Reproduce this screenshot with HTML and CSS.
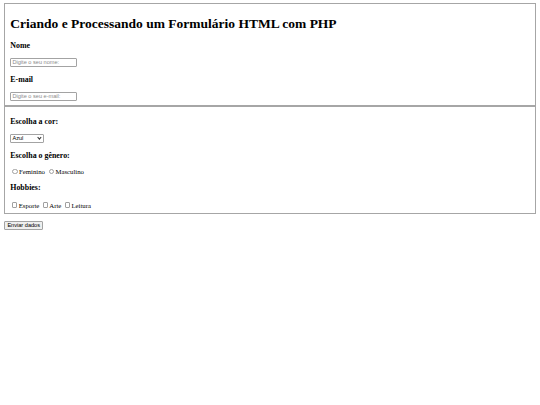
FILE: index.html
```html
<!DOCTYPE html>
<html lang="pt-BR">
<head>
<meta charset="utf-8">
<title>Formulário HTML com PHP</title>
<link rel="stylesheet" href="styles.css">
</head>
<body>
<form class="form" action="#" method="post">
  <fieldset class="group">
    <h1 class="title">Criando e Processando um Formulário HTML com PHP</h1>
    <h3 class="label">Nome</h3>
    <input class="text-field" type="text" name="nome" placeholder="Digite o seu nome:">
    <h3 class="label">E-mail</h3>
    <input class="text-field" type="email" name="email" placeholder="Digite o seu e-mail:">
  </fieldset>
  <fieldset class="group">
    <h3 class="label">Escolha a cor:</h3>
    <span class="select-wrap">
      <select class="select" name="cor">
        <option>Azul</option>
        <option>Verde</option>
        <option>Vermelho</option>
      </select>
    </span>
    <h3 class="label">Escolha o gênero:</h3>
    <div class="options">
      <label class="option"><input class="radio" type="radio" name="genero" value="F">Feminino</label>
      <label class="option"><input class="radio" type="radio" name="genero" value="M">Masculino</label>
    </div>
    <h3 class="label">Hobbies:</h3>
    <div class="options">
      <label class="option"><input class="check" type="checkbox" name="hobbies[]" value="esporte">Esporte</label>
      <label class="option"><input class="check" type="checkbox" name="hobbies[]" value="arte">Arte</label>
      <label class="option"><input class="check" type="checkbox" name="hobbies[]" value="leitura">Leitura</label>
    </div>
  </fieldset>
  <p class="actions"><button class="submit" type="submit">Enviar dados</button></p>
</form>
</body>
</html>
```
FILE: styles.css
```css
html, body {
  background: #ffffff;
}

body {
  margin: 3.4px;
  font-family: "Liberation Serif", "Times New Roman", serif;
  font-size: 6.75px;
  color: #000000;
}

.form {
  margin: 0;
}

.group {
  margin: 0 0.84px;
  padding: 2.36px 5.06px 4.22px;
  border: 1px solid #a6a6a6;
  min-width: 0;
}

.title {
  margin: 9.05px 0;
  font-size: 13.5px;
  font-weight: bold;
}

.label {
  margin: 7.9px 0;
  font-size: 7.9px;
  font-weight: bold;
}

.text-field {
  display: block;
  box-sizing: border-box;
  width: 67px;
  height: 9.2px;
  margin: 0;
  padding: 0 1.2px;
  border: 1px solid #a3a3a3;
  border-radius: 1px;
  background: #ffffff;
  font-family: "Liberation Sans", Arial, sans-serif;
  font-size: 5.6px;
  color: #000000;
  outline: none;
}

.text-field::placeholder {
  color: #8a8a8a;
}

.select-wrap {
  display: block;
  position: relative;
  width: 34px;
}

.select {
  display: block;
  box-sizing: border-box;
  width: 100%;
  height: 8.4px;
  margin: 0;
  padding: 0 1.2px;
  border: 1px solid #a3a3a3;
  border-radius: 1px;
  background: #ffffff;
  font-family: "Liberation Sans", Arial, sans-serif;
  font-size: 5.6px;
  line-height: 6px;
  color: #000000;
  -webkit-appearance: none;
  appearance: none;
}

.select-wrap::after {
  content: "";
  position: absolute;
  right: 3.4px;
  top: 1.9px;
  width: 1.8px;
  height: 1.8px;
  border-right: 1px solid #333333;
  border-bottom: 1px solid #333333;
  transform: rotate(45deg);
  pointer-events: none;
}

.options {
  line-height: normal;
}

.option {
  white-space: nowrap;
}

.radio,
.check {
  -webkit-appearance: none;
  appearance: none;
  box-sizing: border-box;
  display: inline-block;
  width: 5.5px;
  height: 5.5px;
  border: 1px solid #a0a0a0;
  background: #ffffff;
  vertical-align: baseline;
}

.radio {
  margin: 1.27px 1.2px 0 2.1px;
  border-radius: 50%;
}

.check {
  margin: 2.27px 1.2px 1.27px 1.7px;
  border-radius: 1px;
  vertical-align: -1px;
}

.actions {
  margin: 6.75px 0;
}

.submit {
  box-sizing: border-box;
  height: 9px;
  margin: 0 0 0 0.6px;
  padding: 0 2.4px;
  border: 1px solid #a3a3a3;
  border-radius: 1px;
  background: #efefef;
  font-family: "Liberation Sans", Arial, sans-serif;
  font-size: 5.6px;
  line-height: 7px;
  white-space: nowrap;
  color: #000000;
}
```
